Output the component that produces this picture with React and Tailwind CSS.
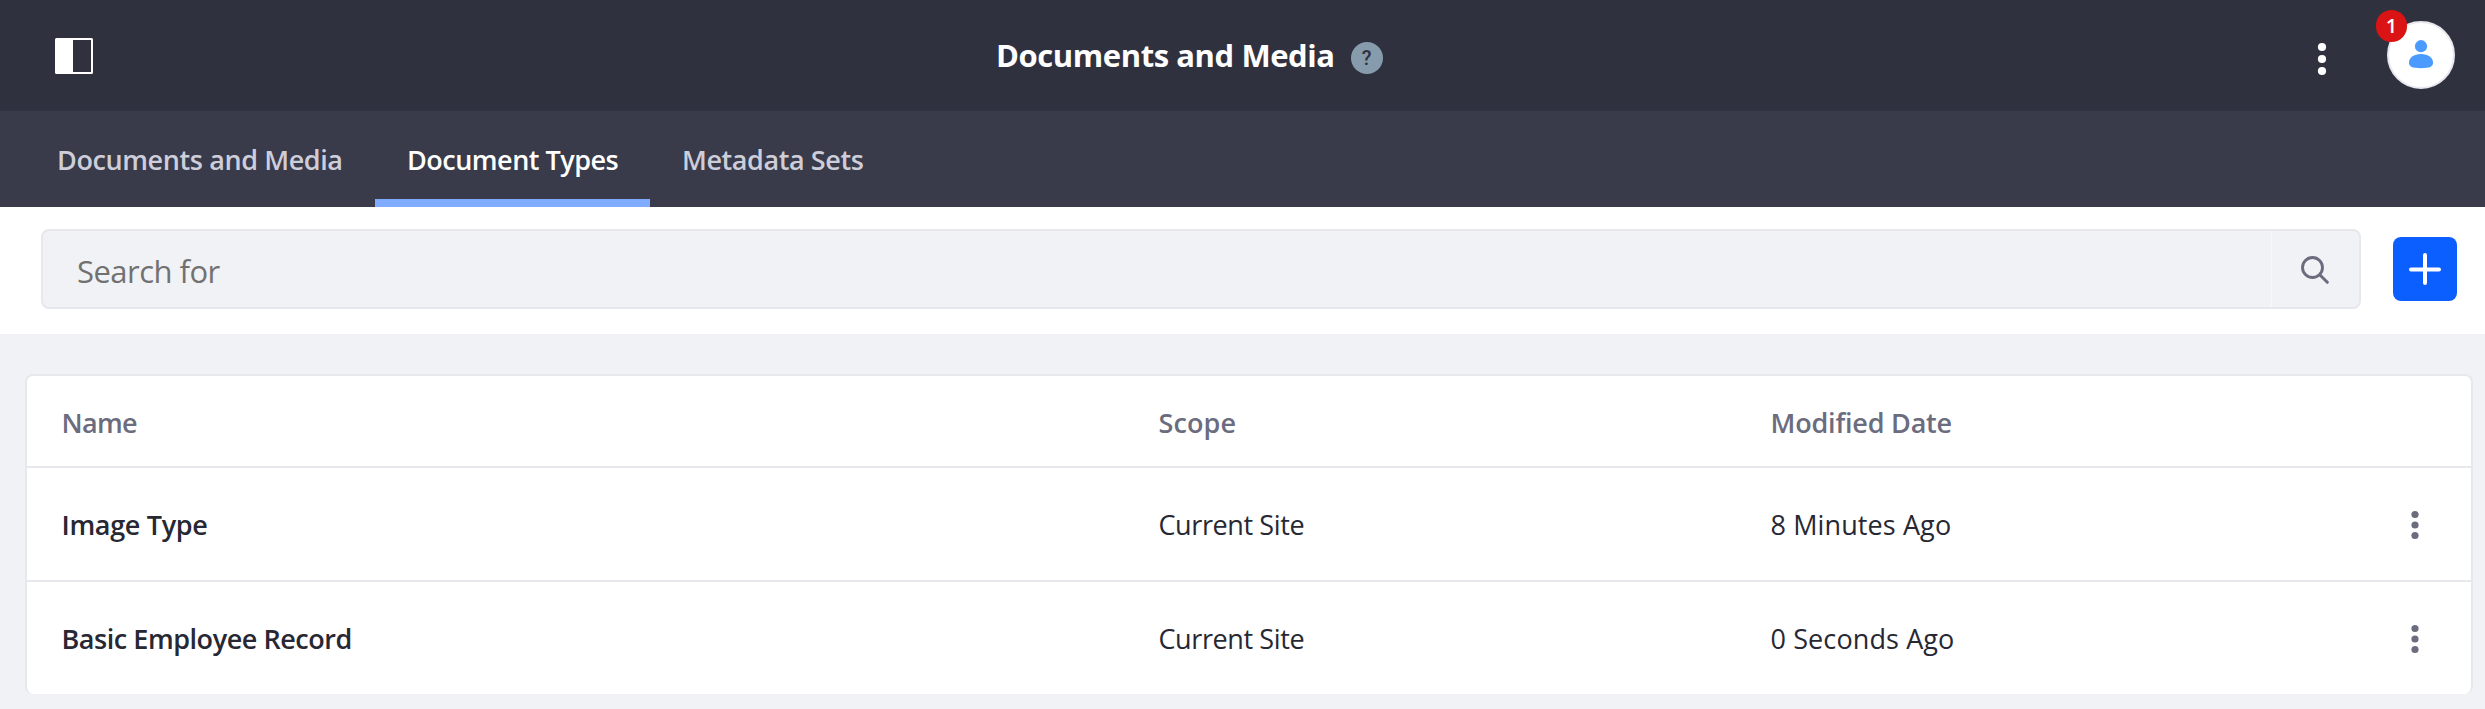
const columns = "grid grid-cols-[1097px_612px_1fr_116px] items-center";

const rows = [
  { name: "Image Type", nameClass: "tracking-[-0.33px]", modified: "8 Minutes Ago" },
  { name: "Basic Employee Record", nameClass: "tracking-[-0.46px]", modified: "0 Seconds Ago" },
];

function PanelIcon() {
  return (
    <svg width="38" height="36" viewBox="0 0 38 36" aria-hidden="true">
      <rect x="1" y="1" width="36" height="34" rx="0.5" fill="none" stroke="#fff" strokeWidth="2" />
      <path d="M1 1h17v34H1z" fill="#fff" />
    </svg>
  );
}

function HeaderDots() {
  return (
    <svg width="10" height="34" viewBox="0 0 10 34" fill="#fff" aria-hidden="true">
      <circle cx="5" cy="5" r="4.1" />
      <circle cx="5" cy="17" r="4.1" />
      <circle cx="5" cy="29" r="4.1" />
    </svg>
  );
}

function RowDots() {
  return (
    <svg width="8" height="30" viewBox="0 0 8 30" fill="#6b6c7e" aria-hidden="true">
      <circle cx="4" cy="4.5" r="3.6" />
      <circle cx="4" cy="15" r="3.6" />
      <circle cx="4" cy="25.5" r="3.6" />
    </svg>
  );
}

function UserIcon() {
  return (
    <svg width="24" height="29" viewBox="0 0 24 29" fill="#4b9bff" aria-hidden="true">
      <circle cx="12" cy="6.2" r="6.1" />
      <path d="M12 14c7.4 0 12 3.6 12 8.6 0 4.2-3 5.6-12 5.6S0 26.8 0 22.6C0 17.6 4.6 14 12 14z" />
    </svg>
  );
}

function SearchIcon() {
  return (
    <svg width="28" height="28" viewBox="0 0 28 28" fill="none" stroke="#6b6c7e" aria-hidden="true">
      <circle cx="11.5" cy="11.5" r="10" strokeWidth="2.9" />
      <path d="M19 19l7.3 7.3" strokeWidth="3" strokeLinecap="round" />
    </svg>
  );
}

function Header() {
  return (
    <header className="flex h-[111px] items-center bg-[#30313f] pl-[55px] pr-[30px]">
      <PanelIcon />
      <div className="flex flex-1 items-center pl-[903px]">
        <h1 className="pb-[2px] text-[31px] leading-[42px] font-bold tracking-[-0.42px] text-white">
          Documents and Media
        </h1>
        <span className="mt-[5px] ml-[16px] flex size-8 items-center justify-center rounded-full bg-[#869cad] font-['Roboto',sans-serif] text-[20px] leading-none font-medium text-[#30313f]">
          ?
        </span>
      </div>
      <div className="mr-[60px] flex pt-[7px]">
        <HeaderDots />
      </div>
      <div className="relative mb-[2px] flex size-[68px] items-center justify-center rounded-full border-2 border-[#e7e7ed] bg-white">
        <UserIcon />
        <span className="absolute -top-[13px] -left-[13px] flex h-8 w-[31px] items-center justify-center rounded-full bg-[#da1414] text-[20px] leading-none font-[560] text-white">
          1
        </span>
      </div>
    </header>
  );
}

function Tabs() {
  return (
    <nav className="flex h-24 bg-[#393a4a] pl-[23px] text-[27px] leading-[42px] font-[560] text-[#cdced9]">
      <a className="flex w-[352px] items-center pt-[2px] pl-[34px] tracking-[-0.4px]">Documents and Media</a>
      <a className="relative flex w-[275px] items-center pt-[2px] pl-[32px] tracking-[-0.5px] text-white">
        Document Types
        <span className="absolute inset-x-0 bottom-0 h-2 bg-[#80acff]" />
      </a>
      <a className="flex items-center pt-[2px] pl-[32px] tracking-[-0.42px]">Metadata Sets</a>
    </nav>
  );
}

function Toolbar() {
  return (
    <div className="flex h-[127px] items-start bg-white pt-[22px] pr-7 pl-[41px]">
      <div className="flex h-20 w-[2320px] rounded-lg border-2 border-[#e7e7ed] bg-[#f1f2f5]">
        <div className="flex flex-1 items-center pt-[4px] pl-[34px] text-[31px] leading-[42px] tracking-[-0.52px] text-[#717171]">
          Search for
        </div>
        <button className="flex w-[88px] items-center border-l border-[#f7f8f9] pt-[2px] pl-[29px]">
          <SearchIcon />
        </button>
      </div>
      <button className="mt-2 ml-8 flex size-16 items-center justify-center rounded-lg bg-[#0b5fff]">
        <svg width="32" height="32" viewBox="0 0 32 32" stroke="#fff" strokeWidth="4" strokeLinecap="round" aria-hidden="true">
          <path d="M16 2v28M2 16.5h28" />
        </svg>
      </button>
    </div>
  );
}

function TypesTable() {
  return (
    <div className="h-80 rounded-lg border-2 border-b-0 border-[#e7e7ed] bg-white text-[27px] leading-[42px] text-[#272833]">
      <div className={`${columns} h-[90px] pt-[3px] pl-[34.5px] font-[560] text-[#6b6c7e]`}>
        <div className="tracking-[-0.7px]">Name</div>
        <div className="tracking-[0.1px]">Scope</div>
        <div className="tracking-[-0.2px]">Modified Date</div>
        <div />
      </div>
      {rows.map((row) => (
        <div key={row.name} className={`${columns} h-[114px] border-t-2 border-[#e7e7ed] pt-[2px] pl-[34.5px]`}>
          <div className={`${row.nameClass} font-[560]`}>{row.name}</div>
          <div className="tracking-[-0.39px]">Current Site</div>
          <div className="tracking-[0.11px]">{row.modified}</div>
          <div className="flex pl-[56px]">
            <RowDots />
          </div>
        </div>
      ))}
    </div>
  );
}

export default function App() {
  return (
    <div className="h-[709px] w-full overflow-hidden bg-[#f1f2f5] font-['Open_Sans','Noto_Sans',sans-serif]">
      <Header />
      <Tabs />
      <Toolbar />
      <main className="pt-10 pr-3 pl-[25px]">
        <TypesTable />
      </main>
    </div>
  );
}
